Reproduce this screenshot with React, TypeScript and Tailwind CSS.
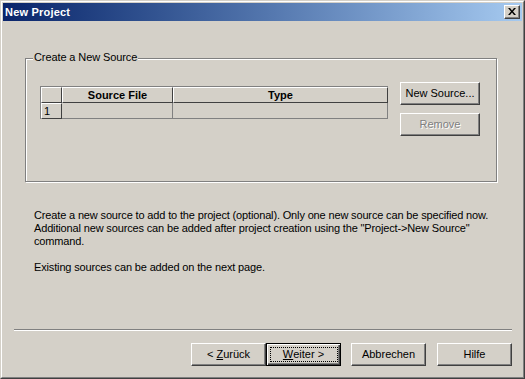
// New Project wizard dialog (Windows classic look)
const font = { fontFamily: '"Liberation Sans", Arial, sans-serif' };

function Button({
  children,
  disabled,
  isDefault,
  className = "",
}: {
  children: React.ReactNode;
  disabled?: boolean;
  isDefault?: boolean;
  className?: string;
}) {
  if (isDefault) {
    return (
      <div
        className={`flex items-center justify-center border border-black bg-[#d4d0c8] shadow-[inset_1px_1px_0_#fff,inset_-1px_-1px_0_#404040,inset_-2px_-2px_0_#808080] ${className}`}
      >
        <div className="flex h-[15px] w-[68px] items-center justify-center border border-dotted border-black text-[11px] leading-[13px] text-black">
          {children}
        </div>
      </div>
    );
  }
  return (
    <div
      className={`flex items-center justify-center border-t border-l border-t-white border-l-white border-r border-b border-r-[#404040] border-b-[#404040] bg-[#d4d0c8] text-[11px] leading-[13px] shadow-[inset_-1px_-1px_0_#808080] ${
        disabled ? "text-[#808080] [text-shadow:1px_1px_0_#fff]" : "text-black"
      } ${className}`}
    >
      {children}
    </div>
  );
}

function SourceTable() {
  const raised =
    "border-t border-l border-t-white border-l-white border-r border-b border-r-[#404040] border-b-[#404040]";
  return (
    <div className="mt-[4px] flex w-[348px] flex-col border-t border-l border-t-[#808080] border-l-[#808080]">
      <div className="flex h-[16px]">
        <div className={`w-[21px] ${raised}`} />
        <div className={`flex w-[111px] items-center justify-center text-[11px] font-bold leading-[13px] ${raised}`}>
          Source File
        </div>
        <div className={`flex w-[215px] items-center justify-center text-[11px] font-bold leading-[13px] ${raised}`}>
          Type
        </div>
      </div>
      <div className="flex h-[16px]">
        <div className={`flex w-[21px] items-center pl-[2px] text-[11px] leading-[13px] ${raised}`}>1</div>
        <div className="w-[111px] border-r border-b border-[#808080]" />
        <div className="w-[215px] border-r border-b border-[#808080]" />
      </div>
    </div>
  );
}

export default function App() {
  return (
    <div
      style={font}
      className="h-[379px] w-[525px] border border-t-[#d4d0c8] border-l-[#d4d0c8] border-r-[#404040] border-b-[#404040] bg-[#d4d0c8] text-black"
    >
      <div className="flex h-full flex-col border border-t-white border-l-white border-r-[#808080] border-b-[#808080] p-[1px]">
        {/* title bar */}
        <div className="flex h-[18px] items-center justify-between bg-gradient-to-r from-[#0a246a] to-[#a6caf0] pl-[2px] pr-[2px]">
          <span className="text-[11px] font-bold leading-[13px] tracking-[0.2px] text-white">New Project</span>
          <div className="flex h-[14px] w-[16px] items-center justify-center border-t border-l border-t-white border-l-white border-r border-b border-r-[#404040] border-b-[#404040] bg-[#d4d0c8] shadow-[inset_-1px_-1px_0_#808080]">
            <svg width="8" height="7" viewBox="0 0 8 7" className="mb-[1px]">
              <path d="M0 0h2l2 2.5L6 0h2L5 3.5 8 7H6L4 4.5 2 7H0l3-3.5z" fill="#000" />
            </svg>
          </div>
        </div>

        {/* group box */}
        <div className="relative ml-[22px] mt-[37px] h-[124px] w-[472px] border border-[#808080] shadow-[inset_1px_1px_0_#fff,1px_1px_0_#fff]">
          <span className="absolute left-[7px] top-[-8px] bg-[#d4d0c8] px-[1px] text-[11px] leading-[13px] tracking-[-0.1px]">
            Create a New Source
          </span>
          <div className="flex items-start gap-[12px] pl-[14px] pt-[23px]">
            <SourceTable />
            <div className="flex flex-col gap-[8px]">
              <Button className="h-[23px] w-[80px]">New Source...</Button>
              <Button disabled className="h-[23px] w-[80px]">
                Remove
              </Button>
            </div>
          </div>
        </div>

        {/* description */}
        <div className="ml-[31px] mt-[27px] whitespace-nowrap text-[11px] leading-[13px] tracking-[-0.15px]">
          <div>Create a new source to add to the project (optional). Only one new source can be specified now.</div>
          <div>Additional new sources can be added after project creation using the "Project-&gt;New Source"</div>
          <div>command.</div>
          <div className="h-[13px]" />
          <div>Existing sources can be added on the next page.</div>
        </div>

        {/* separator */}
        <div className="ml-[11px] mt-[55px] h-[2px] w-[498px] border-t border-b border-t-[#808080] border-b-white" />

        {/* buttons */}
        <div className="mt-[12px] flex justify-end pr-[10px]">
          <Button className="h-[23px] w-[75px]">
            &lt; <span className="ml-[3px] underline">Z</span>urück
          </Button>
          <Button isDefault className="h-[23px] w-[75px]">
            <span className="underline">W</span>eiter &gt;
          </Button>
          <Button className="ml-[10px] h-[23px] w-[75px]">Abbrechen</Button>
          <Button className="ml-[11px] h-[23px] w-[75px]">Hilfe</Button>
        </div>
      </div>
    </div>
  );
}
